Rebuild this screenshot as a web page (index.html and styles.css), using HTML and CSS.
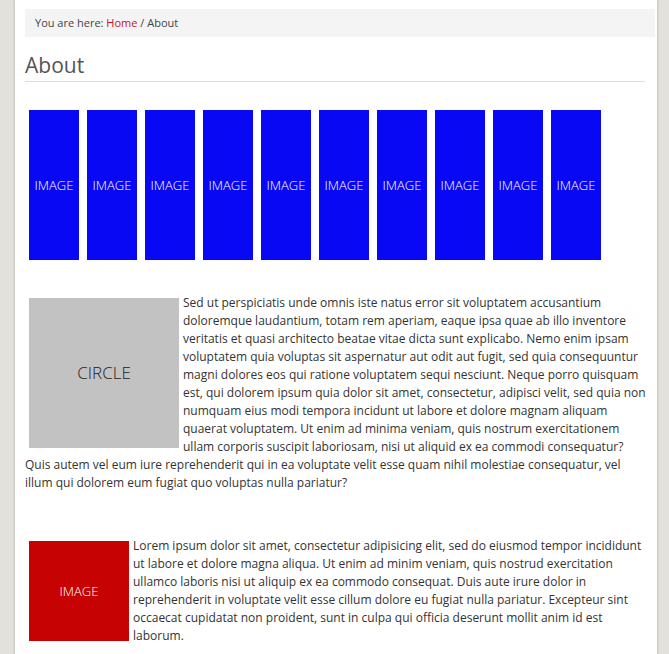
FILE: index.html
```html
<!DOCTYPE html>
<html>
<head>
<meta charset="utf-8">
<title>About</title>
<link rel="stylesheet" href="styles.css">
</head>
<body>
<div class="page">
  <div class="breadcrumb">You are here: <a href="#" class="crumb-link">Home</a> / About</div>
  <div class="main">
    <h1 class="title">About</h1>
    <div class="gallery">
      <div class="tile">IMAGE</div>
      <div class="tile">IMAGE</div>
      <div class="tile">IMAGE</div>
      <div class="tile">IMAGE</div>
      <div class="tile">IMAGE</div>
      <div class="tile">IMAGE</div>
      <div class="tile">IMAGE</div>
      <div class="tile">IMAGE</div>
      <div class="tile">IMAGE</div>
      <div class="tile">IMAGE</div>
    </div>
    <div class="section section-circle">
      <div class="circle">CIRCLE</div>
      <p class="text">Sed ut perspiciatis unde omnis iste natus error sit voluptatem accusantium doloremque laudantium, totam rem aperiam, eaque ipsa quae ab illo inventore veritatis et quasi architecto beatae vitae dicta sunt explicabo. Nemo enim ipsam voluptatem quia voluptas sit aspernatur aut odit aut fugit, sed quia consequuntur magni dolores eos qui ratione voluptatem sequi nesciunt. Neque porro quisquam est, qui dolorem ipsum quia dolor sit amet, consectetur, adipisci velit, sed quia non numquam eius modi tempora incidunt ut labore et dolore magnam aliquam quaerat voluptatem. Ut enim ad minima veniam, quis nostrum exercitationem ullam corporis suscipit laboriosam, nisi ut aliquid ex ea commodi consequatur? Quis autem vel eum iure reprehenderit qui in ea voluptate velit esse quam nihil molestiae consequatur, vel illum qui dolorem eum fugiat quo voluptas nulla pariatur?</p>
    </div>
    <div class="section section-red">
      <div class="redbox">IMAGE</div>
      <p class="text">Lorem ipsum dolor sit amet, consectetur adipisicing elit, sed do eiusmod tempor incididunt ut labore et dolore magna aliqua. Ut enim ad minim veniam, quis nostrud exercitation ullamco laboris nisi ut aliquip ex ea commodo consequat. Duis aute irure dolor in reprehenderit in voluptate velit esse cillum dolore eu fugiat nulla pariatur. Excepteur sint occaecat cupidatat non proident, sunt in culpa qui officia deserunt mollit anim id est laborum.</p>
    </div>
  </div>
</div>
</body>
</html>
```
FILE: styles.css
```css
html, body {
  margin: 0;
  padding: 0;
}
body {
  background: #e3e1db;
  font-family: "Open Sans", "DejaVu Sans", sans-serif;
  color: #333;
  height: 654px;
  overflow: hidden;
}
.page {
  margin-left: 15px;
  width: 642px;
  box-sizing: border-box;
  min-height: 654px;
  background: #fff;
  padding: 9px 2px 20px 10px;
  box-shadow: -1px 0 2px rgba(0,0,0,0.12), 1px 0 2px rgba(0,0,0,0.12);
}
.breadcrumb {
  background: #f4f4f4;
  height: 28px;
  line-height: 28px;
  padding-left: 10px;
  font-size: 11px;
  color: #444;
}
.crumb-link {
  color: #c4161c;
  text-decoration: none;
}
.main {
  margin-right: 10px;
}
.title {
  margin: 14px 0 0 0;
  font-size: 21px;
  font-weight: 400;
  line-height: 28px;
  color: #555;
  padding-bottom: 2px;
  border-bottom: 1px solid #dedede;
}
.gallery {
  display: flex;
  margin-top: 24px;
}
.tile {
  width: 50px;
  height: 150px;
  margin: 4px;
  background: #0808f4;
  color: #fff;
  font-size: 13px;
  font-weight: 300;
  display: flex;
  align-items: center;
  justify-content: center;
}
.section {
  font-size: 12px;
  line-height: 18px;
  margin-right: -3px;
}
.section::after {
  content: "";
  display: block;
  clear: both;
}
.section-circle {
  margin-top: 30px;
}
.section-red {
  margin-top: 45px;
}
.text {
  margin: 0;
}
.circle {
  float: left;
  width: 150px;
  height: 150px;
  margin: 4px;
  background: #c2c2c2;
  color: #222;
  font-size: 17px;
  font-weight: 300;
  display: flex;
  align-items: center;
  justify-content: center;
}
.redbox {
  float: left;
  width: 100px;
  height: 100px;
  margin: 4px;
  background: #c60202;
  color: #fff;
  font-size: 13px;
  font-weight: 300;
  display: flex;
  align-items: center;
  justify-content: center;
}
```
